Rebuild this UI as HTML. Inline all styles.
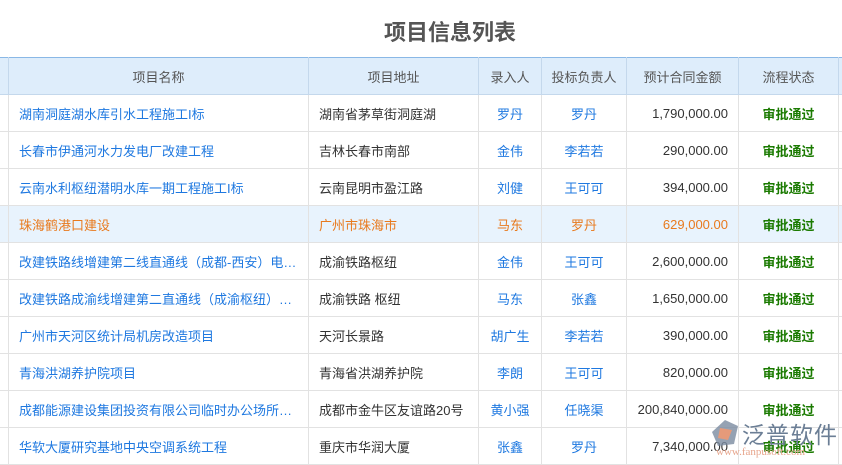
<!DOCTYPE html>
<html><head><meta charset="utf-8"><style>
body{margin:0;width:842px;height:463px;overflow:hidden;background:#fff;font-family:"Liberation Sans","Noto Sans CJK SC",sans-serif;position:relative}
h1{position:absolute;left:0;width:900px;top:18px;margin:0;text-align:center;font-size:22px;font-weight:bold;color:#555;line-height:30px}
table{position:absolute;left:-1px;top:57px;width:859px;border-collapse:collapse;table-layout:fixed;font-size:13px}
td,th{border:1px solid #e2e2e2;height:37px;padding:0 10px;white-space:nowrap;overflow:hidden;text-overflow:ellipsis;box-sizing:border-box}
th{background:#deedfb;color:#555;font-weight:normal;text-align:center;border-color:#c4d8ec;border-top:1px solid #8ab8e6}
td{color:#333}
.b{color:#1e78e0}.c{text-align:center;padding:0}.r{text-align:right}
.g{color:#1a7a00;font-weight:bold;text-align:center;padding:0}
th{padding:0}
tr.h td{background:#e8f3fd;color:#e87a1e}
.wm{position:absolute;top:416px;font-size:23px;color:#6b7e95;letter-spacing:1px;white-space:nowrap}
.wm2{position:absolute;left:716px;top:446px;font-size:11px;color:#e7a58c;white-space:nowrap;font-family:"Liberation Serif",serif}
</style></head><body>
<h1>项目信息列表</h1>
<table>
<colgroup><col style="width:9px"><col style="width:300px"><col style="width:170px"><col style="width:63px"><col style="width:85px"><col style="width:112px"><col style="width:100px"><col style="width:20px"></colgroup>
<tr><th></th><th>项目名称</th><th>项目地址</th><th>录入人</th><th>投标负责人</th><th>预计合同金额</th><th>流程状态</th><th></th></tr>
<tr><td></td><td class="b">湖南洞庭湖水库引水工程施工I标</td><td>湖南省茅草街洞庭湖</td><td class="b c">罗丹</td><td class="b c">罗丹</td><td class="r">1,790,000.00</td><td class="g">审批通过</td><td></td></tr>
<tr><td></td><td class="b">长春市伊通河水力发电厂改建工程</td><td>吉林长春市南部</td><td class="b c">金伟</td><td class="b c">李若若</td><td class="r">290,000.00</td><td class="g">审批通过</td><td></td></tr>
<tr><td></td><td class="b">云南水利枢纽潜明水库一期工程施工I标</td><td>云南昆明市盈江路</td><td class="b c">刘健</td><td class="b c">王可可</td><td class="r">394,000.00</td><td class="g">审批通过</td><td></td></tr>
<tr class="h"><td></td><td>珠海鹤港口建设</td><td>广州市珠海市</td><td class="c">马东</td><td class="c">罗丹</td><td class="r">629,000.00</td><td class="g" style="color:#1a7a00">审批通过</td><td></td></tr>
<tr><td></td><td class="b">改建铁路线增建第二线直通线（成都-西安）电气化工程</td><td>成渝铁路枢纽</td><td class="b c">金伟</td><td class="b c">王可可</td><td class="r">2,600,000.00</td><td class="g">审批通过</td><td></td></tr>
<tr><td></td><td class="b">改建铁路成渝线增建第二直通线（成渝枢纽）工程</td><td>成渝铁路 枢纽</td><td class="b c">马东</td><td class="b c">张鑫</td><td class="r">1,650,000.00</td><td class="g">审批通过</td><td></td></tr>
<tr><td></td><td class="b">广州市天河区统计局机房改造项目</td><td>天河长景路</td><td class="b c">胡广生</td><td class="b c">李若若</td><td class="r">390,000.00</td><td class="g">审批通过</td><td></td></tr>
<tr><td></td><td class="b">青海洪湖养护院项目</td><td>青海省洪湖养护院</td><td class="b c">李朗</td><td class="b c">王可可</td><td class="r">820,000.00</td><td class="g">审批通过</td><td></td></tr>
<tr><td></td><td class="b">成都能源建设集团投资有限公司临时办公场所建设</td><td>成都市金牛区友谊路20号</td><td class="b c">黄小强</td><td class="b c">任晓渠</td><td class="r">200,840,000.00</td><td class="g">审批通过</td><td></td></tr>
<tr><td></td><td class="b">华软大厦研究基地中央空调系统工程</td><td>重庆市华润大厦</td><td class="b c">张鑫</td><td class="b c">罗丹</td><td class="r">7,340,000.00</td><td class="g">审批通过</td><td></td></tr>
</table>
<svg style="position:absolute;left:710px;top:418px" width="30" height="30"><path d="M15 2 L28 8 L24 26 L8 28 L2 14 Z" fill="#7a8ba0" opacity=".8"/><path d="M10 10 L22 12 L18 22 L8 20Z" fill="#e59a7a"/></svg>
<div class="wm" style="left:742px">泛普软件</div>
<div class="wm2">www.fanpusoft.com</div>
</body></html>
